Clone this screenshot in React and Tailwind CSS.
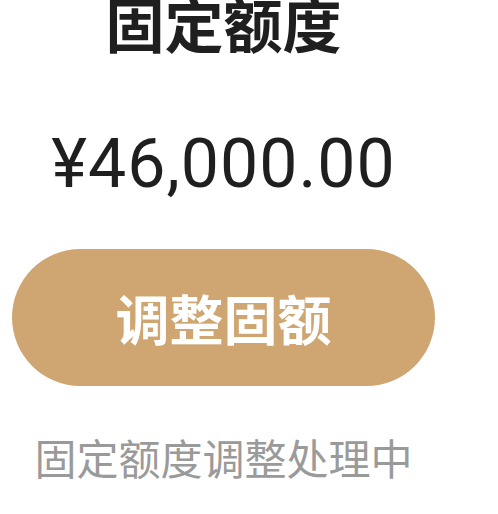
export default function App() {
  return (
    <div className="w-[498px] h-[514px] bg-white overflow-hidden">
      <div className="w-[447px] flex flex-col items-center font-['Noto_Sans_CJK_SC',sans-serif]">
        <div className="-mt-[7px] text-[59px] leading-none font-bold text-[#1f1f1f]">固定额度</div>
        <div className="mt-[78px] text-[68px] leading-none font-normal tracking-[1px] text-[#1f1f1f] font-['Roboto','Noto_Sans_CJK_SC',sans-serif]">¥46,000.00</div>
        <button className="mt-[51px] w-[423px] h-[137px] rounded-full bg-[#cfa572] text-white text-[54px] font-bold leading-none">调整固额</button>
        <div className="mt-[50px] text-[42px] leading-none text-[#9a9a9a]">固定额度调整处理中</div>
      </div>
    </div>
  );
}
